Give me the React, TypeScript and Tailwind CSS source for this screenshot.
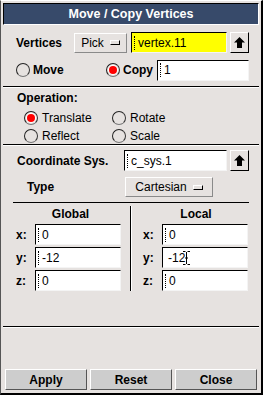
import React from "react";

const F = "font-['Liberation_Sans',Arial,Helvetica,sans-serif]";

function Cursor() {
  return (
    <span className="inline-block w-[3px] h-[14px] mr-[1px] align-middle border-l border-dotted border-black" />
  );
}

function Entry({ value, w, yellow, ibeam }: { value: string; w: string; yellow?: boolean; ibeam?: boolean }) {
  return (
    <div
      className={`${w} h-[21px] flex items-center pl-[2px] border-t border-l border-black border-b border-r border-b-[#f4f4f4] border-r-[#f4f4f4] ${
        yellow ? "bg-[#ffff00]" : "bg-white"
      } text-[12px] text-black leading-none`}
    >
      {ibeam ? null : <Cursor />}
      <span className={ibeam ? "ml-[3px]" : ""}>{value}</span>
      {ibeam && (
        <svg width="7" height="14" viewBox="0 0 7 14" className="-ml-[2px]">
          <path d="M0 0.5H2.5M4.5 0.5H7M0 13.5H2.5M4.5 13.5H7M3.5 1V13M2 7H5" stroke="black" strokeWidth="1" fill="none" />
        </svg>
      )}
    </div>
  );
}

function ArrowBtn() {
  return (
    <div className="w-[19px] h-[21px] flex items-center justify-center border border-t-white border-l-white border-b-black border-r-black bg-[#e6e2e0]">
      <svg width="11" height="11" viewBox="0 0 11 11">
        <path d="M5.5 0 L11 5.5 H8 V11 H3 V5.5 H0 Z" fill="black" />
      </svg>
    </div>
  );
}

function OptionMenu({ label, w }: { label: string; w: string }) {
  return (
    <div
      className={`${w} h-[20px] flex items-center justify-center gap-[6px] border border-t-white border-l-white border-b-[#8a8a8a] border-r-[#8a8a8a] bg-[#e6e2e0] text-[12px] text-black`}
    >
      <span>{label}</span>
      <span className="w-[10px] h-[5px] border border-t-white border-l-white border-b-black border-r-black" />
    </div>
  );
}

function Radio({ on, label, bold, gap = "gap-[3px]" }: { on?: boolean; label: string; bold?: boolean; gap?: string }) {
  return (
    <div className={`flex items-center ${gap}`}>
      <div className="w-[14px] h-[14px] rounded-full border border-t-[#222] border-l-[#222] border-b-[#777] border-r-[#333] flex items-center justify-center">
        {on && (
          <div className="w-[10px] h-[10px] rounded-full bg-white flex items-center justify-center">
            <div className="w-[8px] h-[8px] rounded-full bg-[#ff0000]" />
          </div>
        )}
      </div>
      <span className={`text-[12px] text-black ${bold ? "font-bold" : ""}`}>{label}</span>
    </div>
  );
}

function Sep({ cls = "" }: { cls?: string }) {
  return <div className={`h-[2px] border-t border-black border-b border-b-white ${cls}`} />;
}

function CoordRow({ axis, value, ibeam }: { axis: string; value: string; ibeam?: boolean }) {
  return (
    <div className="flex items-center h-[23px]">
      <span className="w-[19px] text-[12px] font-bold text-black">{axis}</span>
      <Entry value={value} w="w-[86px]" ibeam={ibeam} />
    </div>
  );
}

export default function App() {
  return (
    <div className={`${F} w-[263px] h-[395px] bg-[#e6e2e0] border-l border-t border-l-[#555] border-t-white border-r-2 border-b-2 border-black flex flex-col pt-[2px] px-[2px]`}>
      <div className="h-[22px] border-t border-l border-black border-b border-r border-b-white border-r-white bg-[#374a6a] flex items-center justify-center text-white font-bold text-[12.5px] leading-none">
        Move / Copy Vertices
      </div>

      {/* section 1 */}
      <div className="flex flex-col pt-[7px]">
        <div className="flex items-center h-[21px]">
          <span className="ml-[13px] w-[58px] text-[12px] font-bold text-black">Vertices</span>
          <OptionMenu label="Pick" w="w-[53px]" />
          <div className="ml-[4px]">
            <Entry value="vertex.11" w="w-[96px]" yellow />
          </div>
          <div className="ml-[3px]">
            <ArrowBtn />
          </div>
        </div>
        <div className="flex items-center h-[22px] mt-[6px]">
          <div className="ml-[13px] w-[90px]">
            <Radio label="Move" bold />
          </div>
          <div className="w-[51px]">
            <Radio label="Copy" bold on />
          </div>
          <Entry value="1" w="w-[92px]" />
        </div>
      </div>

      <Sep cls="mt-[5px]" />

      {/* Operation */}
      <div className="flex flex-col pl-[14px] pt-[3px] h-[56px]">
        <span className="text-[12px] font-bold text-black leading-[15px]">Operation:</span>
        <div className="grid grid-cols-[88px_88px] pl-[7px] mt-[3px]">
          <Radio label="Translate" on gap="gap-[4px]" />
          <Radio label="Rotate" gap="gap-[4px]" />
          <Radio label="Reflect" gap="gap-[4px]" />
          <Radio label="Scale" gap="gap-[4px]" />
        </div>
      </div>

      <Sep />

      {/* Coordinate */}
      <div className="flex flex-col pt-[4px]">
        <div className="flex items-center h-[21px]">
          <span className="ml-[14px] w-[107px] text-[12px] font-bold text-black">Coordinate Sys.</span>
          <Entry value="c_sys.1" w="w-[103px]" />
          <div className="ml-[3px]">
            <ArrowBtn />
          </div>
        </div>
        <div className="flex items-center h-[20px] mt-[6px]">
          <span className="ml-[24px] w-[98px] text-[12px] font-bold text-black">Type</span>
          <OptionMenu label="Cartesian" w="w-[88px]" />
        </div>
        <div className="mx-[10px] mt-[5px] h-[1px] bg-black" />
        <div className="flex mx-[10px]">
          <div className="w-[117px] flex flex-col pl-[3px] pt-[2px]">
            <div className="text-center text-[12px] font-bold text-black h-[18px] leading-[18px] pr-[5px]">Global</div>
            <CoordRow axis="x:" value="0" />
            <CoordRow axis="y:" value="-12" />
            <CoordRow axis="z:" value="0" />
          </div>
          <div className="w-[2px] mt-[3px] mb-[1px] border-l border-black border-r border-r-white" />
          <div className="flex-1 flex flex-col pl-[11px] pt-[2px]">
            <div className="text-center text-[12px] font-bold text-black h-[18px] leading-[18px]">Local</div>
            <CoordRow axis="x:" value="0" />
            <CoordRow axis="y:" value="-12" ibeam />
            <CoordRow axis="z:" value="0" />
          </div>
        </div>
      </div>

      <Sep cls="mt-[34px]" />

      <div className="flex-1" />

      <div className="flex gap-[3px] px-[2px] pb-[3px]">
        {["Apply", "Reset", "Close"].map((b) => (
          <div
            key={b}
            className="flex-1 h-[21px] flex items-center justify-center bg-[#cdcdcd] border border-t-white border-l-white border-b-[#555] border-r-[#555] text-[12px] font-bold text-black"
          >
            {b}
          </div>
        ))}
      </div>
    </div>
  );
}
